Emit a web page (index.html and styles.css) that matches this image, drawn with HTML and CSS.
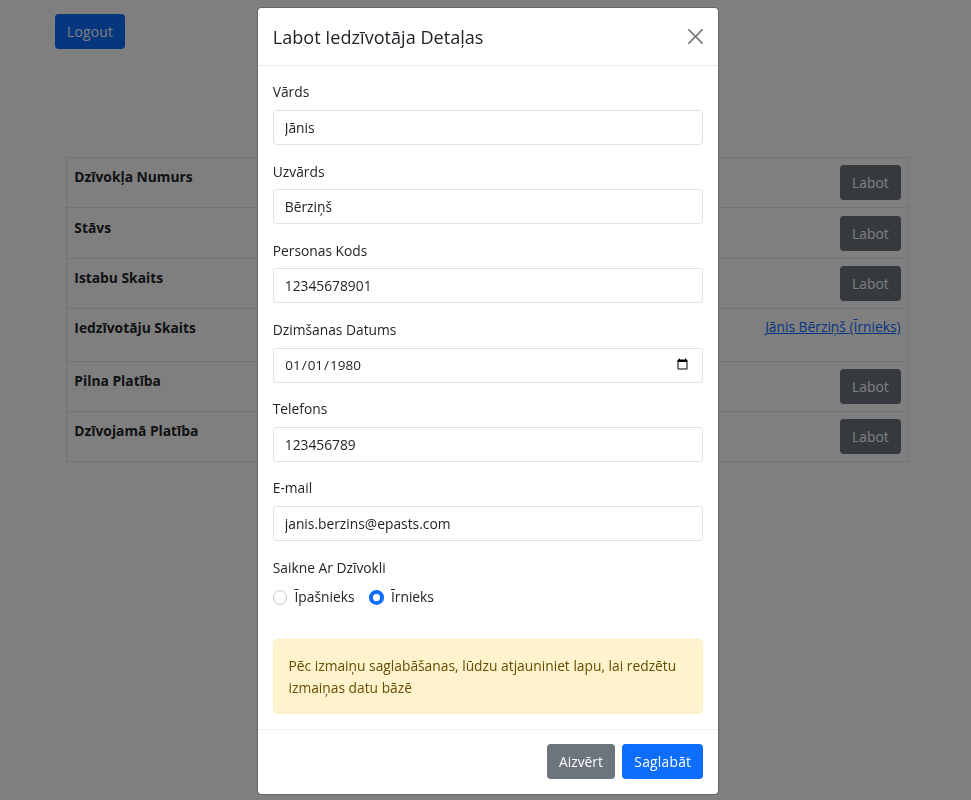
FILE: index.html
```html
<!DOCTYPE html>
<html lang="lv">
<head>
    <meta charset="UTF-8">
    <meta name="viewport" content="width=device-width, initial-scale=1.0">
    <title>Dzīvokļa Detaļas</title>
    <link rel="stylesheet" href="styles.css">
</head>
<body>
    <div class="page">
        <button class="btn btn-primary" type="button">Logout</button>

        <table class="details">
            <tr>
                <th>Dzīvokļa Numurs</th>
                <td><button class="btn btn-secondary" type="button">Labot</button></td>
            </tr>
            <tr>
                <th>Stāvs</th>
                <td><button class="btn btn-secondary" type="button">Labot</button></td>
            </tr>
            <tr>
                <th>Istabu Skaits</th>
                <td><button class="btn btn-secondary" type="button">Labot</button></td>
            </tr>
            <tr>
                <th>Iedzīvotāju Skaits</th>
                <td><p class="resident"><a href="#">Jānis Bērziņš (Īrnieks)</a></p></td>
            </tr>
            <tr>
                <th>Pilna Platība</th>
                <td><button class="btn btn-secondary" type="button">Labot</button></td>
            </tr>
            <tr>
                <th>Dzīvojamā Platība</th>
                <td><button class="btn btn-secondary" type="button">Labot</button></td>
            </tr>
        </table>
    </div>

    <div class="backdrop"></div>

    <div class="modal">
        <div class="modal-content">
            <div class="modal-header">
                <h5 class="modal-title">Labot Iedzīvotāja Detaļas</h5>
                <button class="btn-close" type="button" aria-label="Close">
                    <svg viewBox="0 0 16 16" width="15" height="15"><path d="M.293.293a1 1 0 011.414 0L8 6.586 14.293.293a1 1 0 111.414 1.414L9.414 8l6.293 6.293a1 1 0 01-1.414 1.414L8 9.414l-6.293 6.293a1 1 0 01-1.414-1.414L6.586 8 .293 1.707a1 1 0 010-1.414z"/></svg>
                </button>
            </div>

            <form class="modal-body">
                <div class="field">
                    <label for="vards">Vārds</label>
                    <input class="control" type="text" id="vards" value="Jānis">
                </div>
                <div class="field">
                    <label for="uzvards">Uzvārds</label>
                    <input class="control" type="text" id="uzvards" value="Bērziņš">
                </div>
                <div class="field">
                    <label for="kods">Personas Kods</label>
                    <input class="control" type="text" id="kods" value="12345678901">
                </div>
                <div class="field">
                    <label for="datums">Dzimšanas Datums</label>
                    <input class="control control-date" type="date" id="datums" value="1980-01-01">
                </div>
                <div class="field">
                    <label for="telefons">Telefons</label>
                    <input class="control" type="text" id="telefons" value="123456789">
                </div>
                <div class="field">
                    <label for="epasts">E-mail</label>
                    <input class="control" type="text" id="epasts" value="janis.berzins@epasts.com">
                </div>
                <div class="field">
                    <label>Saikne Ar Dzīvokli</label>
                    <div class="radios">
                        <label class="radio"><input type="radio" name="saikne"> Īpašnieks</label>
                        <label class="radio"><input type="radio" name="saikne" checked> Īrnieks</label>
                    </div>
                </div>
                <div class="alert">Pēc izmaiņu saglabāšanas, lūdzu atjauniniet lapu, lai redzētu izmaiņas datu bāzē</div>
            </form>

            <div class="modal-footer">
                <button class="btn btn-secondary" type="button">Aizvērt</button>
                <button class="btn btn-primary" type="button">Saglabāt</button>
            </div>
        </div>
    </div>
</body>
</html>
```

FILE: styles.css
```css
html {
    font-size: 14.72px;
}

body {
    font-family: "Open Sans", "Noto Sans", sans-serif;
    font-size: 13.8px;
    line-height: 22.08px;
    margin: 0;
    color: #212529;
    background-color: #fff;
}

.page {
    padding: 14px 62px 0 66px;
}

.page > .btn {
    margin-left: -11px;
}

.btn {
    font: inherit;
    height: 35px;
    padding: 1px 0.75rem 0;
    border: 1px solid transparent;
    border-radius: 0.25rem;
    color: #fff;
    cursor: pointer;
}

.btn-primary {
    background-color: #0d6efd;
    letter-spacing: 0.25px;
}

.btn-secondary {
    background-color: #6c757d;
}

.details {
    width: 100%;
    margin-top: 108px;
    border-collapse: collapse;
}

.details th,
.details td {
    padding: 7.2px 7.36px;
    border: 1px solid #e6e8ea;
    vertical-align: top;
}

.details th {
    width: 30%;
    padding-top: 8.3px;
    text-align: left;
}

.details td {
    text-align: right;
}

.details .btn {
    vertical-align: top;
}

.resident {
    margin: 0 0 15px;
}

.resident a {
    color: #0d6efd;
}

.backdrop {
    position: fixed;
    inset: 0;
    background-color: rgba(0, 0, 0, 0.5);
}

.modal {
    position: fixed;
    top: 7px;
    left: 257px;
    width: 462px;
}

.modal-content {
    background-color: #fff;
    border: 1px solid rgba(0, 0, 0, 0.2);
    border-radius: 0.3rem;
    background-clip: padding-box;
}

.modal-header {
    display: flex;
    align-items: center;
    justify-content: space-between;
    padding: 1rem;
    border-bottom: 1px solid #e9ecef;
}

.modal-title {
    margin: 1px 0 -1px;
    font-size: 18.1px;
    font-weight: 500;
    line-height: 1.5;
}

.btn-close {
    display: flex;
    padding: 0;
    border: none;
    background: none;
    cursor: pointer;
}

.btn-close svg {
    fill: #000;
    opacity: 0.5;
}

.modal-body {
    padding: 1rem;
}

.field {
    margin-bottom: 1rem;
}

.field > label {
    display: block;
    padding-top: 1px;
    margin-bottom: 6.45px;
}

.control {
    display: block;
    width: 100%;
    height: 35px;
    box-sizing: border-box;
    padding: 0 0.75rem;
    font: inherit;
    color: #212529;
    background-color: #fff;
    border: 1px solid #dee2e6;
    border-radius: 0.25rem;
}

.control-date {
    padding-left: 10.5px;
    font-size: 13.5px;
}

.radios {
    display: flex;
    gap: 1rem;
    padding-top: 1px;
    margin-bottom: 0.125rem;
}

.radio {
    display: flex;
    align-items: center;
    gap: 7px;
}

.radio input {
    appearance: none;
    width: 1rem;
    height: 1rem;
    margin: 0;
    background-color: #fff;
    border: 1px solid #c4c8cc;
    border-radius: 50%;
}

.radio input:checked {
    border: 4px solid #0d6efd;
}

.alert {
    margin-top: 30.5px;
    padding: 15px 1rem 14px;
    color: #664d03;
    background-color: #fff3cd;
    border: 1px solid #fff0c4;
    border-radius: 0.25rem;
}

.modal-footer {
    display: flex;
    justify-content: flex-end;
    gap: 0.5rem;
    padding: 14.3px 1rem 1rem;
    border-top: 1px solid #f0f1f3;
}
```
